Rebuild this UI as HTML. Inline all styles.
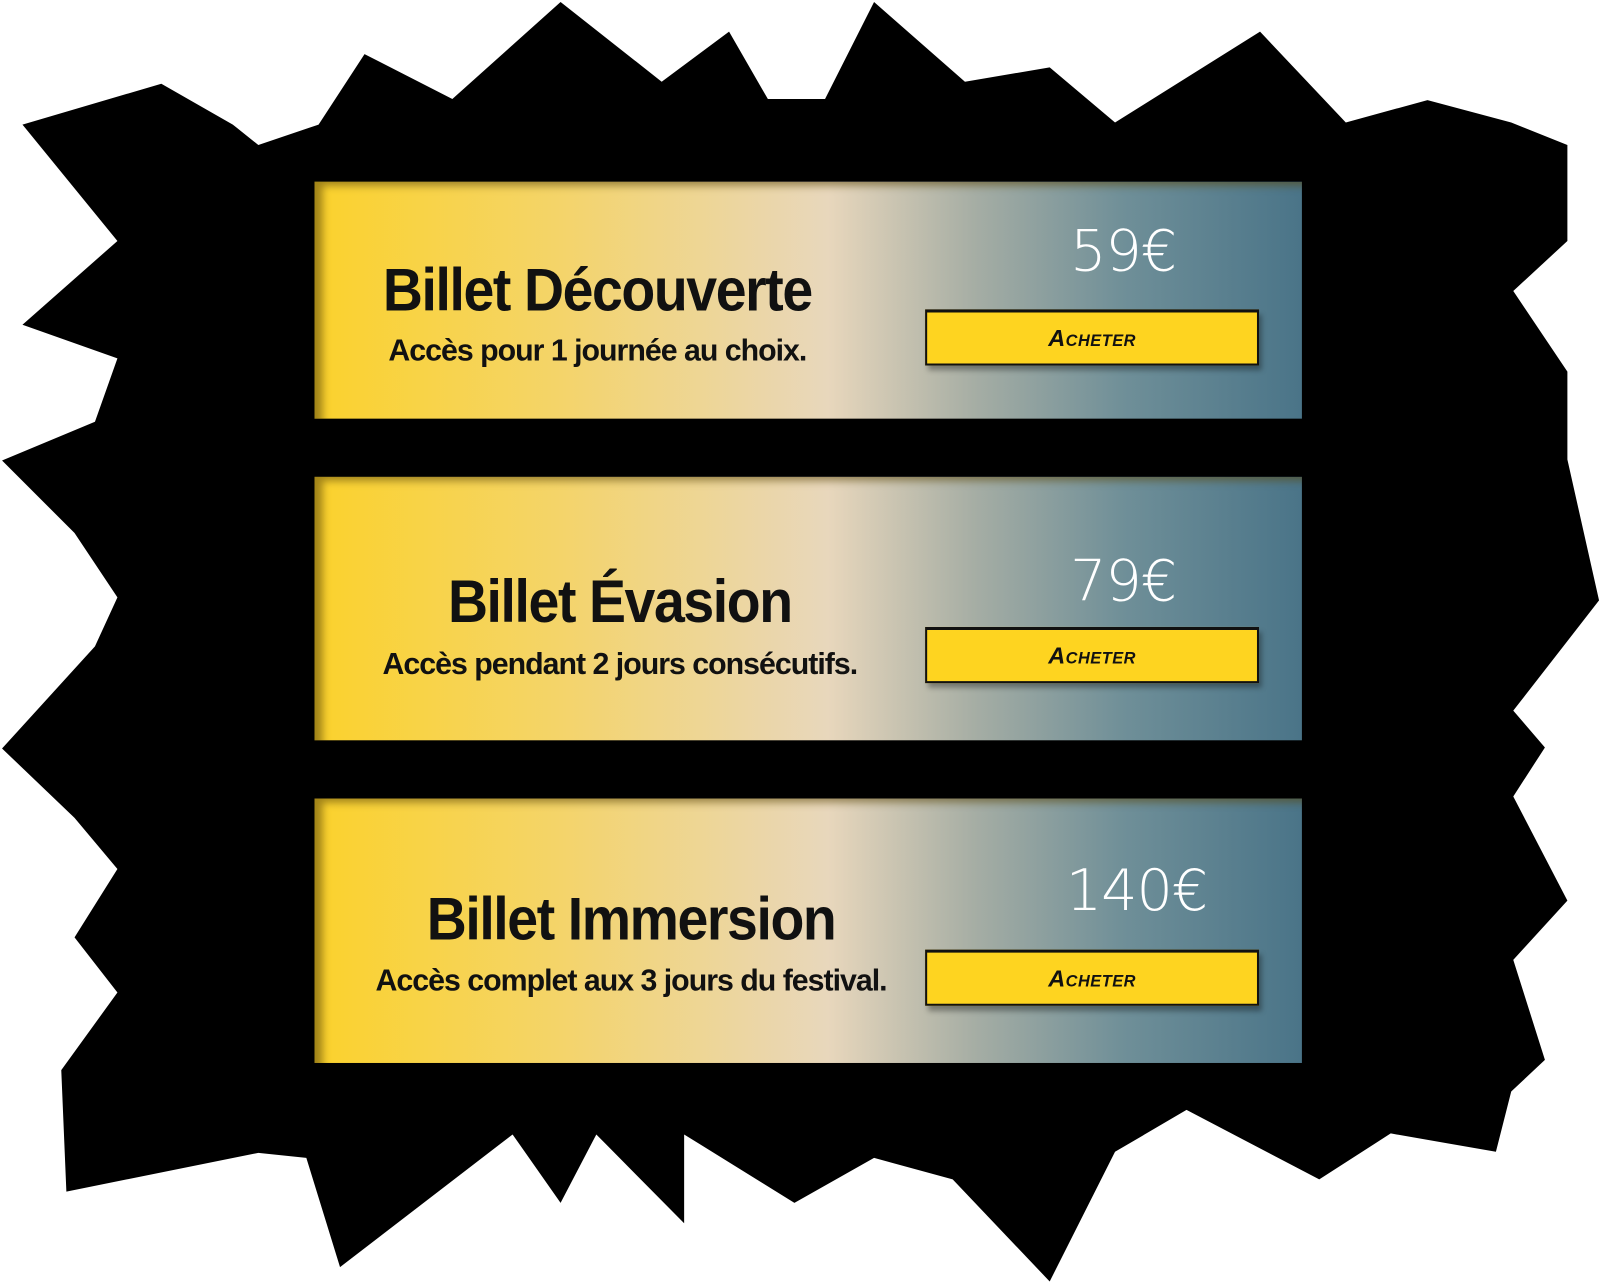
<!DOCTYPE html>
<html><head><meta charset="utf-8"><style>
html,body{margin:0;padding:0;background:#fff;width:1601px;height:1285px;overflow:hidden}
#w{position:absolute;left:0;top:0;width:1568px;height:1258px;transform:scale(1.0211);transform-origin:0 0}
svg{position:absolute;left:0;top:0}
.card{position:absolute;left:308px;width:967px;background:linear-gradient(90deg,#fbd22c 0%,#f4d46a 25%,#e8d7bc 52%,#a5ada4 67%,#6f8f98 82%,#4a7488 100%);box-shadow:inset 14px 10px 8px -6px rgba(90,70,10,.55);overflow:hidden}
.t{position:absolute;transform:translateX(-50%);white-space:nowrap;font-family:"Liberation Sans",sans-serif;font-weight:bold;color:#111}
.title{font-size:59px;letter-spacing:-1.5px;transform:translateX(-50%) scaleX(.92)}
.sub{font-size:30px;letter-spacing:-1px;transform:translateX(-50%) scaleX(.99)}
.price{position:absolute;font-family:"DejaVu Sans","Liberation Sans",sans-serif;font-weight:200;color:#fff;font-size:56px;transform:translateX(-50%);white-space:nowrap;letter-spacing:-1px}
.btn{position:absolute;left:598px;width:323px;height:50px;background:#fed420;border:2.5px solid #111;border-top-width:3px;box-shadow:3px 5px 5px rgba(0,0,0,.35);text-align:center;line-height:50px;font-family:"Liberation Sans",sans-serif;font-weight:bold;font-style:italic;font-size:23px;color:#111;font-variant:small-caps;letter-spacing:.5px}
</style></head><body><div id="w">
<svg width="1568" height="1258" viewBox="0 0 1568 1258"><polygon fill="#000" points="22,122 158,82 228,122 253,142 312,122 357,53 443,97 549,2 648,80 714,31 752,97 808,97 856,2 945,80 1028,66 1092,120 1234,31 1318,120 1398,98 1480,120 1535,142 1535,236 1482,285 1535,364 1535,450 1566,588 1482,696 1513,732 1482,780 1535,882 1482,940 1513,1038 1480,1069 1465,1128 1362,1110 1292,1155 1162,1087 1092,1128 1028,1255 933,1155 856,1134 778,1178 670,1111 670,1198 584,1111 549,1178 502,1111 333,1241 300,1134 253,1129 65,1167 60,1048 115,972 73,918 115,851 73,801 2,733 93,633 115,585 73,522 2,451 93,413 115,351 22,318 115,236"/></svg>

<div class="card" style="top:178px;height:232px">
<div class="t title" style="left:277px;top:72px">Billet Découverte</div>
<div class="t sub" style="left:277px;top:149px">Accès pour 1 journée au choix.</div>
<div class="price" style="left:792px;top:36px">59€</div>
<div class="btn" style="top:125px">Acheter</div>
</div>

<div class="card" style="top:467px;height:258px">
<div class="t title" style="left:299px;top:88px">Billet Évasion</div>
<div class="t sub" style="left:299px;top:167px">Accès pendant 2 jours consécutifs.</div>
<div class="price" style="left:792px;top:70px">79€</div>
<div class="btn" style="top:147px">Acheter</div>
</div>

<div class="card" style="top:782px;height:259px">
<div class="t title" style="left:310px;top:84px">Billet Immersion</div>
<div class="t sub" style="left:310px;top:162px">Accès complet aux 3 jours du festival.</div>
<div class="price" style="left:805px;top:58px">140€</div>
<div class="btn" style="top:148px">Acheter</div>
</div>
</div></body></html>
